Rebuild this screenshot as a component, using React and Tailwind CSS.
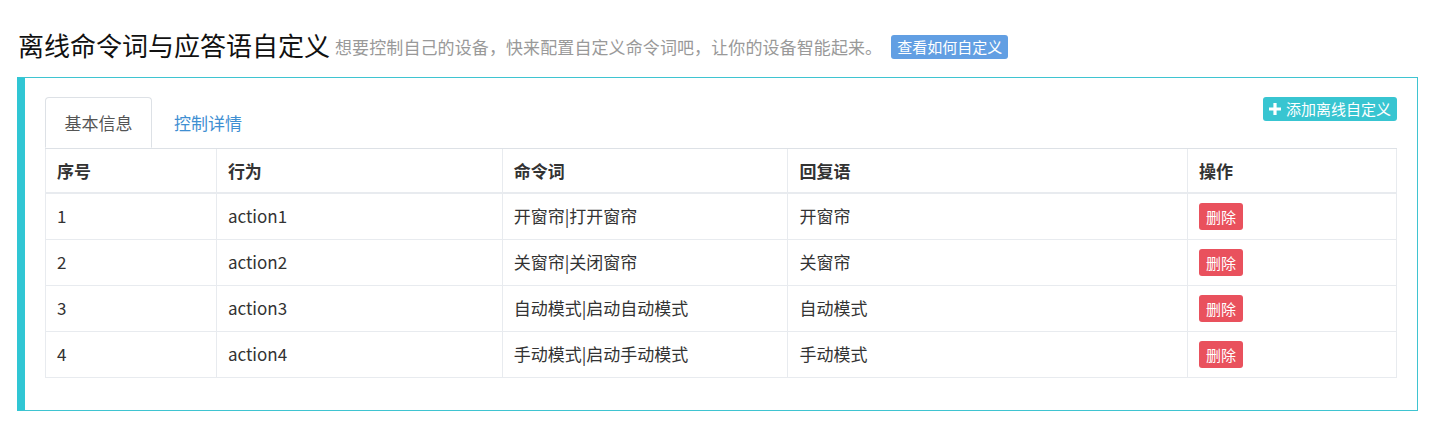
const rows = [
  { id: 1, action: "action1", words: "开窗帘|打开窗帘", reply: "开窗帘" },
  { id: 2, action: "action2", words: "关窗帘|关闭窗帘", reply: "关窗帘" },
  { id: 3, action: "action3", words: "自动模式|启动自动模式", reply: "自动模式" },
  { id: 4, action: "action4", words: "手动模式|启动手动模式", reply: "手动模式" },
];

function PlusIcon() {
  return (
    <svg width="12" height="12" viewBox="0 0 12 12" className="shrink-0">
      <path d="M4.4 0h3.2v4.4H12v3.2H7.6V12H4.4V7.6H0V4.4h4.4z" fill="#fff" />
    </svg>
  );
}

export default function App() {
  const cell = "border border-[#e8ebef] px-[11px] text-left align-middle";
  return (
    <div
      className="bg-white pl-[17px] pr-[14px] pt-[27px] text-[#333]"
      style={{ fontFamily: '"Noto Sans CJK SC", "Noto Sans", sans-serif' }}
    >
      <div className="flex items-center ml-px h-[36px]">
        <h1 className="text-[26px] leading-[30px] font-normal text-[#111]">离线命令词与应答语自定义</h1>
        <span className="ml-[5px] mt-[4px] text-[17px] leading-[24px] text-[#999] tracking-[0.1px]">
          想要控制自己的设备，快来配置自定义命令词吧，让你的设备智能起来。
        </span>
        <button className="ml-[9px] mt-[4px] h-[24px] px-[6px] rounded-[3px] bg-[#629fe3] text-white text-[15px] leading-[22px]">
          查看如何自定义
        </button>
      </div>

      <div className="mt-[14px] border border-[#3fc4d1] border-l-[8px] border-l-[#30c6d4] pt-[19px] px-[20px] pb-[32px]">
        <div className="flex justify-between items-start border-b border-[#dde1e6]">
          <div className="flex">
            <div className="h-[51px] -mb-px px-[18.5px] flex items-center border border-[#dde1e6] border-b-white rounded-t-[4px] bg-white text-[17px] text-[#555]">
              基本信息
            </div>
            <div className="h-[51px] ml-[2px] px-[20px] flex items-center text-[17px] text-[#3f8fd2]">
              控制详情
            </div>
          </div>
          <button className="h-[24px] px-[6px] flex items-center gap-[5px] rounded-[3px] bg-[#38c5d1] text-white text-[15px] leading-[22px]">
            <PlusIcon />
            添加离线自定义
          </button>
        </div>

        <table className="w-full border-collapse text-[17px] leading-[24px]">
          <colgroup>
            <col className="w-[171px]" />
            <col className="w-[286px]" />
            <col className="w-[286px]" />
            <col className="w-[400px]" />
            <col className="w-[209px]" />
          </colgroup>
          <thead>
            <tr className="h-[44px]">
              {["序号", "行为", "命令词", "回复语", "操作"].map((h) => (
                <th key={h} className={`${cell} font-bold border-t-0 border-b-2`}>
                  {h}
                </th>
              ))}
            </tr>
          </thead>
          <tbody>
            {rows.map((r) => (
              <tr key={r.id} className="h-[46px]">
                <td className={cell}>{r.id}</td>
                <td className={cell}>{r.action}</td>
                <td className={cell}>{r.words}</td>
                <td className={cell}>{r.reply}</td>
                <td className={cell}>
                  <button className="h-[27px] px-[7px] rounded-[3px] bg-[#e9515d] text-white text-[15px] leading-[27px]">
                    删除
                  </button>
                </td>
              </tr>
            ))}
          </tbody>
        </table>
      </div>
    </div>
  );
}
